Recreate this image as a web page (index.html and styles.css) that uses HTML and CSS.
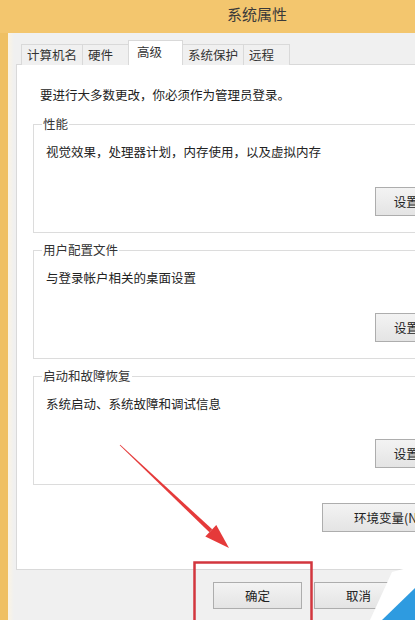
FILE: index.html
```html
<!DOCTYPE html>
<html lang="zh-CN">
<head>
  <meta charset="UTF-8">
  <meta name="viewport" content="width=device-width, initial-scale=1.0">
  <title>系统属性</title>
  <link rel="stylesheet" href="styles.css">
</head>
<body>
  <div class="window">
    <div class="titlebar">系统属性</div>
    <div class="client">
      <div class="tabs">
        <div class="tab">计算机名</div>
        <div class="tab">硬件</div>
        <div class="tab tab-active">高级</div>
        <div class="tab">系统保护</div>
        <div class="tab">远程</div>
      </div>
      <div class="panel">
        <p class="intro">要进行大多数更改，你必须作为管理员登录。</p>

        <fieldset class="group">
          <legend>性能</legend>
          <p class="group-text">视觉效果，处理器计划，内存使用，以及虚拟内存</p>
          <div class="group-actions"><button class="btn">设置(S)...</button></div>
        </fieldset>

        <fieldset class="group">
          <legend>用户配置文件</legend>
          <p class="group-text">与登录帐户相关的桌面设置</p>
          <div class="group-actions"><button class="btn">设置(E)...</button></div>
        </fieldset>

        <fieldset class="group">
          <legend>启动和故障恢复</legend>
          <p class="group-text">系统启动、系统故障和调试信息</p>
          <div class="group-actions"><button class="btn">设置(T)...</button></div>
        </fieldset>

        <div class="env-row"><button class="btn btn-wide">环境变量(N)...</button></div>
      </div>
      <div class="actions">
        <button class="btn btn-dialog">确定</button>
        <button class="btn btn-dialog">取消</button>
        <button class="btn btn-dialog">应用(A)</button>
      </div>
    </div>
  </div>

  <svg class="marks" width="415" height="620" viewBox="0 0 415 620">
    <!-- arrow pointing at OK -->
    <polygon points="119.7,445.3 120.3,444.7 212.2,529.3 209.4,532.3" fill="#e53a3a"/>
    <polygon points="229,548 205.3,536.6 216.3,525" fill="#e53a3a"/>
    <rect x="194.5" y="562.5" width="117" height="60" fill="none" stroke="#d2363e" stroke-width="2.5"/>
    <!-- corner watermark -->
    <polygon points="370,620 392,572 415,566 415,620" fill="#ffffff"/>
    <polygon points="382,620 415,588 415,620" fill="#2e9be0"/>
  </svg>
</body>
</html>
```

FILE: styles.css
```css
html, body {
  margin: 0;
  width: 415px;
  height: 620px;
  overflow: hidden;
}

body {
  position: relative;
  background: #f0f0f0;
  font-family: "Noto Sans CJK SC", "Noto Sans", sans-serif;
  font-size: 12.5px;
  color: #222;
}

.window {
  width: 520px;
  height: 620px;
  display: flex;
  flex-direction: column;
  background: #efc063;
}

.titlebar {
  height: 33px;
  box-sizing: border-box;
  padding: 4px 6px 0 0;
  text-align: center;
  font-size: 15px;
  line-height: 20px;
  color: #3a3a3a;
  background: #f3c66e;
}

.client {
  flex: 1;
  margin: 0 8px;
  padding: 7px 8px 0;
  background: linear-gradient(to right, #fbf4e4, #f0f0f0 6px);
}

/* tabs */
.tabs {
  display: flex;
  align-items: flex-end;
  height: 25px;
  padding-left: 5px;
  margin-bottom: -1px;
  position: relative;
  z-index: 1;
}

.tab {
  height: 21px;
  box-sizing: border-box;
  min-width: 47px;
  padding: 0 5px;
  margin-right: -1px;
  border: 1px solid #d9d9d9;
  border-bottom: none;
  background: #f0f0f0;
  line-height: 20px;
  color: #333;
}

.tab-active {
  height: 25px;
  min-width: 55px;
  padding: 2px 8px 0;
  line-height: 18px;
  background: #fff;
  position: relative;
  z-index: 2;
}

/* panel */
.panel {
  border: 1px solid #d9d9d9;
  background: #fff;
  padding: 22px 16px 37px;
}

.intro {
  margin: 0 0 13px 7px;
  line-height: 16px;
}

.group {
  margin: 0 0 9px;
  border: 1px solid #dcdcdc;
  padding: 12px 22px 16px 8px;
}

.group:last-of-type {
  margin-bottom: 18px;
}

.group legend {
  padding: 0 1px;
  line-height: 16px;
  color: #333;
}

.group-text {
  margin: 0 0 27px 4px;
  line-height: 16px;
}

.group-actions,
.env-row {
  display: flex;
  justify-content: flex-end;
}

.env-row {
  padding-right: 23px;
}

.btn {
  box-sizing: border-box;
  width: 89px;
  height: 29px;
  padding: 0;
  border: 1px solid #adadad;
  background: linear-gradient(#f3f3f3, #e4e4e4);
  font: inherit;
  color: #222;
}

.btn-wide {
  width: 142px;
}

.actions {
  display: flex;
  justify-content: flex-end;
  gap: 12px;
  padding-top: 12px;
}

.btn-dialog {
  height: 27px;
}

.marks {
  position: absolute;
  top: 0;
  left: 0;
  pointer-events: none;
}
```
